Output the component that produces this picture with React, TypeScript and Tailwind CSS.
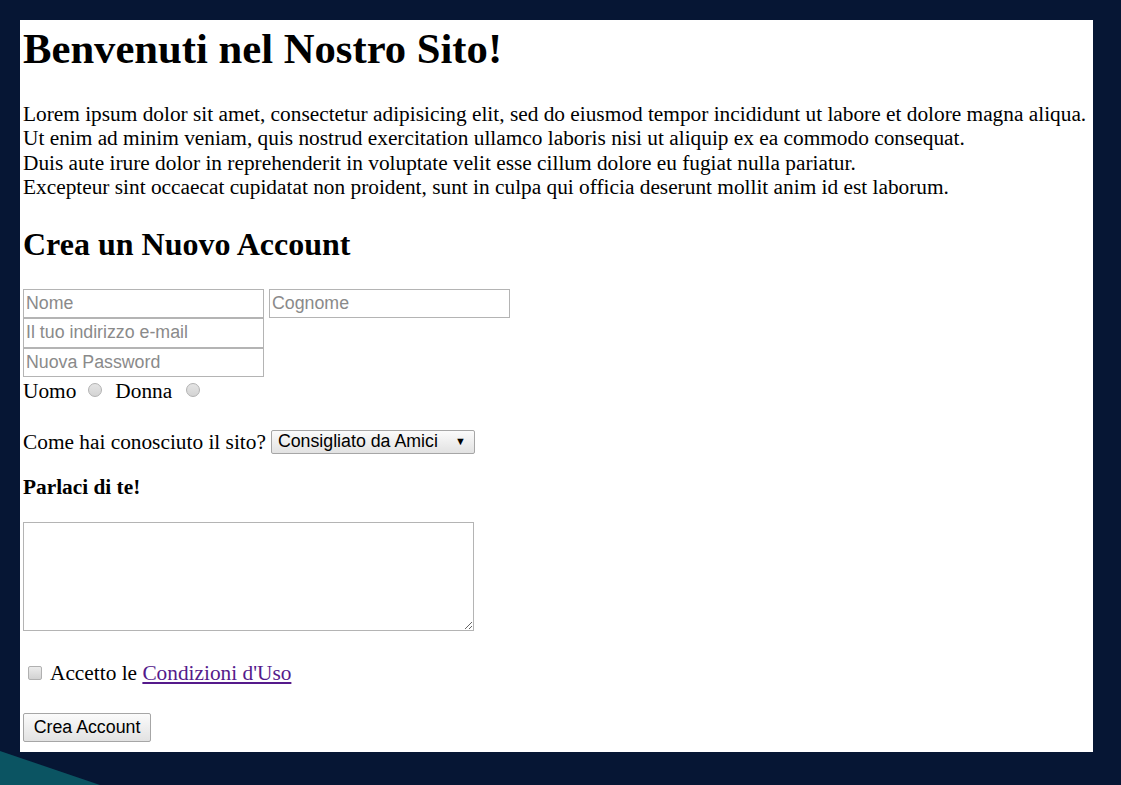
import React from "react";

const serif = "font-['Liberation_Serif',_'Times_New_Roman',_serif]";
const sans = "font-['Liberation_Sans',_Arial,_sans-serif]";

const inputCls = `${sans} block w-[241px] h-[29.3px] border border-[#b4b4b4] bg-white px-[2px] text-[17.78px] text-black placeholder:text-[#8a8a8a] outline-none`;

const radioCls =
  "appearance-none shrink-0 w-[14px] h-[14px] rounded-full border border-[#b2b2b2] bg-gradient-to-b from-[#e4e4e4] to-[#d4d4d4] -translate-y-[1px]";

const App: React.FC = () => {
  return (
    <div className="relative h-[785px] overflow-hidden bg-[#061634] p-[20px]">
      {/* decorative backdrop */}
      <svg className="absolute left-0 bottom-0" width="120" height="40" viewBox="0 0 120 40">
        <polygon points="0,6 100,40 0,40" fill="#0b5462" />
      </svg>

      <main className={`relative w-[1073px] bg-white px-[3px] pt-[4px] pb-[10px] text-black ${serif}`}>
        <h1 className="text-[42.67px] font-bold leading-[49px] mb-[28.5px]">Benvenuti nel Nostro Sito!</h1>

        <p className="text-[21.33px] leading-[24.5px]">
          Lorem ipsum dolor sit amet, consectetur adipisicing elit, sed do eiusmod tempor incididunt ut labore et dolore magna aliqua.
          <br />
          Ut enim ad minim veniam, quis nostrud exercitation ullamco laboris nisi ut aliquip ex ea commodo consequat.
          <br />
          Duis aute irure dolor in reprehenderit in voluptate velit esse cillum dolore eu fugiat nulla pariatur.
          <br />
          Excepteur sint occaecat cupidatat non proident, sunt in culpa qui officia deserunt mollit anim id est laborum.
        </p>

        <h2 className="mt-[26.5px] mb-[26px] text-[32px] font-bold leading-[37px]">Crea un Nuovo Account</h2>

        <form className="text-[21.33px] leading-[24.5px]" onSubmit={(e) => e.preventDefault()}>
          <div className="flex gap-[5px]">
            <input className={inputCls} placeholder="Nome" />
            <input className={inputCls} placeholder="Cognome" />
          </div>
          <input className={inputCls} placeholder="Il tuo indirizzo e-mail" />
          <input className={inputCls} type="password" placeholder="Nuova Password" />

          <div className="mt-[2px] flex items-center">
            <span>Uomo</span>
            <input type="radio" name="sesso" className={`${radioCls} ml-[12px]`} />
            <span className="ml-[13px]">Donna</span>
            <input type="radio" name="sesso" className={`${radioCls} ml-[14px]`} />
          </div>

          <div className="mt-[25px] flex items-center h-[27px]">
            <span>Come hai conosciuto il sito?</span>
            <span
              className={`${sans} ml-[5px] inline-flex h-[24px] w-[204px] items-center justify-between rounded-[2px] border border-[#a6a6a6] bg-gradient-to-b from-[#fbfbfb] to-[#e2e2e2] pl-[6px] pr-[8px] text-[17.78px] leading-none`}
            >
              Consigliato da Amici
              <span className="text-[11px]">▼</span>
            </span>
          </div>

          <h4 className="mt-[19.5px] font-bold">Parlaci di te!</h4>

          <textarea className="mt-[23px] block h-[109px] w-[451px] border border-[#b4b4b4] bg-white" />

          <div className="mt-[30px] flex items-center">
            <input
              type="checkbox"
              className="appearance-none shrink-0 ml-[5px] w-[14px] h-[14px] rounded-[2px] border border-[#b0b0b0] bg-gradient-to-b from-[#ececec] to-[#d2d2d2] -translate-y-[1px]"
            />
            <span className="ml-[8px]">
              Accetto le{" "}
              <a href="#" className="text-[#551a8b] underline">
                Condizioni d'Uso
              </a>
            </span>
          </div>

          <button
            type="submit"
            className={`${sans} mt-[27px] block h-[29px] w-[128px] rounded-[2px] border border-[#a6a6a6] bg-gradient-to-b from-[#fbfbfb] to-[#e2e2e2] text-[17.78px] text-black`}
          >
            Crea Account
          </button>
        </form>
      </main>
    </div>
  );
};

export default App;
